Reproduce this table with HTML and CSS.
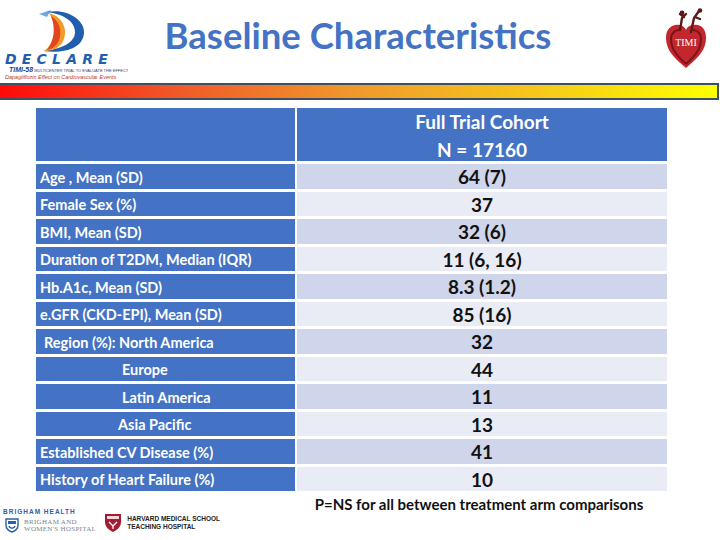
FILE: index.html
```html
<!DOCTYPE html>
<html>
<head>
<meta charset="utf-8">
<link rel="stylesheet" href="styles.css">
</head>
<body>
<header class="top">
  <div class="declare">
    <svg class="declare-mark" width="60" height="46" viewBox="0 0 60 46">
      <path d="M8 6 L20 2 L16 9 Z" fill="#6fa8dc"/>
      <path d="M16 4 C36 0 54 12 53 25 C52 40 34 46 12 43 C30 41 44 35 44 24 C44 13 32 6 16 4 Z" fill="#1f5fae"/>
      <path d="M18 5 C33 9 38 24 31 35 C27 41 20 43 13 43 C24 35 27 20 18 5 Z" fill="#f39a2b"/>
      <path d="M20 8 C30 14 32 27 26 36 C23 40 19 41 16 42 C23 33 25 20 20 8 Z" fill="#e2461f"/>
    </svg>
    <div class="declare-word">DECLARE</div>
    <div class="declare-sub"><b>TIMI-58</b> <span>MULTICENTER TRIAL TO EVALUATE THE EFFECT</span></div>
    <div class="declare-red">Dapagliflozin Effect on Cardiovascular Events</div>
  </div>
  <h1 class="title">Baseline Characteristics</h1>
  <div class="timi">
    <svg width="44" height="62" viewBox="0 0 44 62">
      <path d="M22 60 C10 50 2 42 2 30 C2 21 8 16 15 17 C18 17 21 19 22 22 C23 19 26 17 30 17 C37 16 42 21 42 30 C42 42 34 50 22 60 Z" fill="#c1272d"/>
      <path d="M22 56 C13 48 7 41 7 31 C7 25 11 22 15 22" fill="none" stroke="#7a1418" stroke-width="2"/>
      <path d="M22 56 C31 48 37 41 37 31 C37 25 33 22 29 22" fill="none" stroke="#7a1418" stroke-width="2"/>
      <path d="M16 22 L18 10 L22 6 M20 9 L16 6" fill="none" stroke="#5a1a1a" stroke-width="2.4" stroke-linecap="round"/>
      <circle cx="18" cy="5" r="2.4" fill="#5a1a1a"/>
      <path d="M27 24 L30 10 L35 3 M31 9 L36 11" fill="none" stroke="#5a1a1a" stroke-width="2.4" stroke-linecap="round"/>
      <circle cx="36" cy="2.5" r="2.3" fill="#5a1a1a"/>
      <text x="22" y="38" text-anchor="middle" class="timi-text">TIMI</text>
    </svg>
  </div>
</header>
<div class="bar"></div>
<main class="content">
  <div class="table">
    <div class="lh head"></div>
    <div class="vh head">Full Trial Cohort<br>N = 17160</div>

    <div class="lh">Age , Mean (SD)</div><div class="v a">64 (7)</div>
    <div class="lh">Female Sex (%)</div><div class="v b">37</div>
    <div class="lh">BMI, Mean (SD)</div><div class="v a">32 (6)</div>
    <div class="lh">Duration of T2DM, Median (IQR)</div><div class="v b">11 (6, 16)</div>
    <div class="lh">Hb.A1c, Mean (SD)</div><div class="v a">8.3 (1.2)</div>
    <div class="lh">e.GFR (CKD-EPI), Mean (SD)</div><div class="v b">85 (16)</div>
    <div class="lh ind1">Region (%): North America</div><div class="v a">32</div>
    <div class="lh ind2">Europe</div><div class="v b">44</div>
    <div class="lh ind2">Latin America</div><div class="v a">11</div>
    <div class="lh ind3">Asia Pacific</div><div class="v b">13</div>
    <div class="lh">Established CV Disease (%)</div><div class="v a">41</div>
    <div class="lh">History of Heart Failure (%)</div><div class="v b">10</div>

    <div class="logos">
      <div class="brigham">
        <div class="bh-title">BRIGHAM HEALTH</div>
        <div class="bh-row">
          <svg width="14" height="15" viewBox="0 0 14 15">
            <path d="M1 1 H13 V7 C13 11 10 13 7 14 C4 13 1 11 1 7 Z" fill="#fff" stroke="#2b5fa8" stroke-width="1.4"/>
            <rect x="3" y="3" width="8" height="3" fill="#2b5fa8"/>
            <path d="M4 8 C5 11 9 11 10 8" fill="none" stroke="#2b5fa8" stroke-width="1.4"/>
          </svg>
          <div class="bh-name">BRIGHAM AND<br>WOMEN'S HOSPITAL</div>
        </div>
      </div>
      <div class="harvard">
        <svg width="18" height="20" viewBox="0 0 18 20">
          <path d="M1 1 H17 V9 C17 14 13 17 9 19 C5 17 1 14 1 9 Z" fill="#a51c30"/>
          <rect x="3" y="3" width="12" height="3" fill="#f2d6da"/>
          <path d="M5 9 L9 13 L13 9 M9 13 V16" fill="none" stroke="#fff" stroke-width="1.3"/>
        </svg>
        <div class="hv-name">HARVARD MEDICAL SCHOOL<br>TEACHING HOSPITAL</div>
      </div>
    </div>
    <div class="note">P=NS for all between treatment arm comparisons</div>
  </div>
</main>
</body>
</html>
```
FILE: styles.css
```css
* { box-sizing: border-box; }
html, body { margin: 0; padding: 0; background: #fff; }
body {
  width: 720px;
  height: 540px;
  overflow: hidden;
  font-family: Lato, "Open Sans", sans-serif;
}
.top {
  height: 83px;
  display: flex;
  align-items: flex-start;
}
.declare {
  width: 160px;
  padding-left: 5px;
  height: 83px;
}
.declare-mark {
  display: block;
  margin: 8px 0 0 26px;
}
.declare-word {
  margin-top: -1px;
  font-family: "DejaVu Sans", sans-serif;
  font-style: italic;
  font-weight: bold;
  font-size: 14px;
  letter-spacing: 5.2px;
  color: #1f5fae;
  line-height: 13px;
}
.declare-sub {
  font-family: "Liberation Sans", sans-serif;
  font-size: 4px;
  line-height: 7px;
  color: #1f3f80;
  white-space: nowrap;
  padding-left: 4px;
}
.declare-sub b {
  font-size: 7px;
  font-style: italic;
}
.declare-red {
  font-family: "Liberation Sans", sans-serif;
  font-size: 5.5px;
  line-height: 7px;
  color: #c0392b;
  white-space: nowrap;
  font-style: italic;
}
.title {
  margin: 13px 0 0 -2px;
  width: 400px;
  text-align: center;
  font-family: Lato, sans-serif;
  font-weight: bold;
  font-size: 36.5px;
  line-height: 44px;
  color: #4472c4;
}
.timi {
  margin: 8px 0 0 106px;
}
.timi svg { display: block; }
.timi-text {
  font-family: "Liberation Serif", serif;
  font-size: 10px;
  fill: #fff;
}
.bar {
  height: 17px;
  width: 719px;
  border-top: 2px solid #3c4f63;
  border-bottom: 2px solid #3c4f63;
  border-right: 2px solid #3c4f63;
  background: linear-gradient(90deg, #ff0a0a 0%, #f05a28 25%, #ef9a2c 50%, #f6c81a 75%, #ffff00 100%);
}
.content {
  padding: 8px 0 0 36px;
}
.table {
  display: grid;
  grid-template-columns: 259px 370px;
  grid-template-rows: 53px repeat(12, 24.5px) auto;
  column-gap: 2px;
  row-gap: 3px;
}
.lh {
  background: #4472c4;
  color: #fff;
  font-weight: bold;
  font-size: 14.5px;
  padding-left: 4px;
  display: flex;
  align-items: center;
  padding-top: 2px;
  white-space: nowrap;
}
.ind1 { padding-left: 8px; }
.ind2 { padding-left: 86px; }
.ind3 { padding-left: 82px; }
.vh {
  background: #4472c4;
  color: #fff;
  font-weight: bold;
  font-size: 19px;
  line-height: 28px;
  text-align: center;
  padding-top: 0;
}
.v {
  color: #111;
  font-weight: bold;
  font-size: 19px;
  display: flex;
  align-items: center;
  justify-content: center;
  padding-top: 1px;
}
.v.a { background: #cfd5ea; }
.v.b { background: #e9ebf5; }
.logos {
  margin: 14px 0 0 -33px;
  display: flex;
  align-items: flex-start;
  gap: 8px;
}
.bh-title {
  font-family: "Liberation Sans", sans-serif;
  font-weight: bold;
  font-size: 6.5px;
  letter-spacing: 1px;
  color: #2b5fa8;
  line-height: 8px;
}
.bh-row {
  display: flex;
  align-items: center;
  gap: 5px;
  margin-top: 2px;
  margin-left: 2px;
}
.bh-row svg { display: block; }
.bh-name {
  font-family: "Liberation Serif", serif;
  font-size: 7px;
  line-height: 7px;
  color: #7a8590;
  letter-spacing: 0.3px;
}
.harvard {
  display: flex;
  align-items: center;
  gap: 5px;
  margin-top: 5px;
}
.harvard svg { display: block; }
.hv-name {
  font-family: "Liberation Sans", sans-serif;
  font-weight: bold;
  font-size: 6.5px;
  line-height: 8px;
  color: #222;
}
.note {
  text-align: center;
  font-weight: bold;
  font-size: 15px;
  color: #111;
  margin-top: 1px;
  padding-right: 6px;
  white-space: nowrap;
}
```
